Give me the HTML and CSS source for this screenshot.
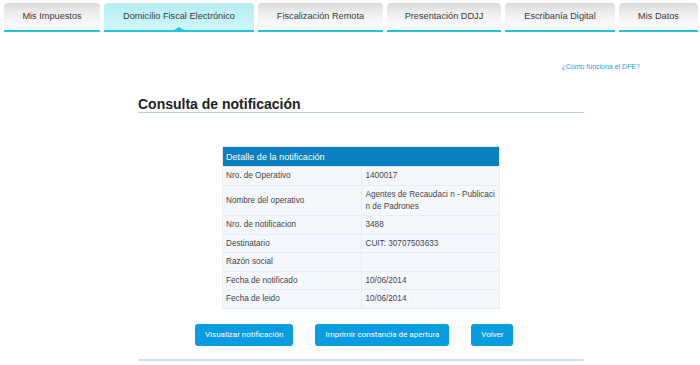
FILE: index.html
```html
<!DOCTYPE html>
<html lang="es">
<head>
<meta charset="utf-8">
<title>Consulta de notificación</title>
<link rel="stylesheet" href="styles.css">
</head>
<body>
<nav class="tabs">
  <a class="tab t1">Mis Impuestos</a>
  <a class="tab t2 active">Domicilio Fiscal Electrónico</a>
  <a class="tab t3">Fiscalización Remota</a>
  <a class="tab t4">Presentación DDJJ</a>
  <a class="tab t5">Escribanía Digital</a>
  <a class="tab t6">Mis Datos</a>
</nav>
<div class="help"><a class="help-link">¿Cómo funciona el DFE?</a></div>
<main class="content">
  <h1 class="title">Consulta de notificación</h1>
  <table class="detail">
    <thead>
      <tr><th colspan="2">Detalle de la notificación</th></tr>
    </thead>
    <tbody>
      <tr><td>Nro. de Operativo</td><td>1400017</td></tr>
      <tr><td>Nombre del operativo</td><td>Agentes de Recaudaci n - Publicaci n de Padrones</td></tr>
      <tr><td>Nro. de notificacion</td><td>3488</td></tr>
      <tr><td>Destinatario</td><td>CUIT: 30707503633</td></tr>
      <tr><td>Razón social</td><td></td></tr>
      <tr><td>Fecha de notificado</td><td>10/06/2014</td></tr>
      <tr><td>Fecha de leido</td><td>10/06/2014</td></tr>
    </tbody>
  </table>
  <div class="actions">
    <button class="btn">Visualizar notificación</button>
    <button class="btn">Imprimir constancia de apertura</button>
    <button class="btn">Volver</button>
  </div>
</main>
</body>
</html>
```
FILE: styles.css
```css
html, body {
  margin: 0;
  padding: 0;
  background: #ffffff;
  font-family: "Liberation Sans", Arial, sans-serif;
  color: #333333;
}

.tabs {
  display: flex;
  gap: 4px;
  padding: 3px 0 0 4px;
}

.tab {
  position: relative;
  box-sizing: border-box;
  height: 29px;
  display: flex;
  align-items: center;
  justify-content: center;
  font-size: 9.2px;
  color: #3a3a3a;
  border-radius: 4px 4px 0 0;
  background: linear-gradient(to bottom, #d9d9d9 0%, #ededed 35%, #fbfbfb 85%, #ffffff 100%);
  border-bottom: 2px solid #1fc6dc;
  padding-bottom: 1px;
}

.t1 { width: 96px; }
.t2 { width: 150px; }
.t3 { width: 125px; }
.t4 { width: 114px; }
.t5 { width: 110px; }
.t6 { width: 79px; }

.tab.active {
  background: linear-gradient(to bottom, #b5ecf2 0%, #c3f2f6 50%, #d0f6f9 100%);
}

.tab.active::after {
  content: "";
  position: absolute;
  left: 50%;
  bottom: 0;
  margin-left: -5px;
  border-left: 5px solid transparent;
  border-right: 5px solid transparent;
  border-bottom: 3px solid #1fc6dc;
}

.help {
  padding: 27px 60px 0 0;
  text-align: right;
  line-height: 9px;
  height: 9px;
}

.help-link {
  font-size: 7px;
  color: #2a9ad6;
}

.content {
  width: 446px;
  margin: 0 0 0 138px;
}

.title {
  margin: 28px 0 0 0;
  font-size: 14px;
  line-height: 16px;
  font-weight: bold;
  color: #222222;
  border-bottom: 1px solid #b5d2e3;
}

.detail {
  width: 278px;
  margin: 33px auto 0 auto;
  border-collapse: collapse;
  table-layout: fixed;
  border: 1px solid #e1ebf3;
  font-size: 8.2px;
  color: #444444;
}

.detail th {
  background: #0b80c0;
  color: #ffffff;
  font-weight: normal;
  font-size: 9.1px;
  text-align: left;
  height: 20px;
  padding: 0 3px;
  box-sizing: border-box;
}

.detail td {
  background: #f4f8fc;
  border: 1px solid #e3edf5;
  padding: 3px 4px 2.5px 3px;
  line-height: 12px;
  vertical-align: middle;
  width: 50%;
}

.detail td + td {
  padding-left: 4px;
}

.actions {
  display: flex;
  gap: 22px;
  padding-left: 57px;
  margin-top: 15px;
  padding-bottom: 13px;
  border-bottom: 2px solid #c8dff0;
}

.btn {
  height: 22px;
  border: none;
  border-radius: 3px;
  background: #0a9ce0;
  color: #ffffff;
  font-family: Roboto, "Liberation Sans", sans-serif;
  font-size: 8px;
  padding: 0 10px;
  cursor: pointer;
}
```
